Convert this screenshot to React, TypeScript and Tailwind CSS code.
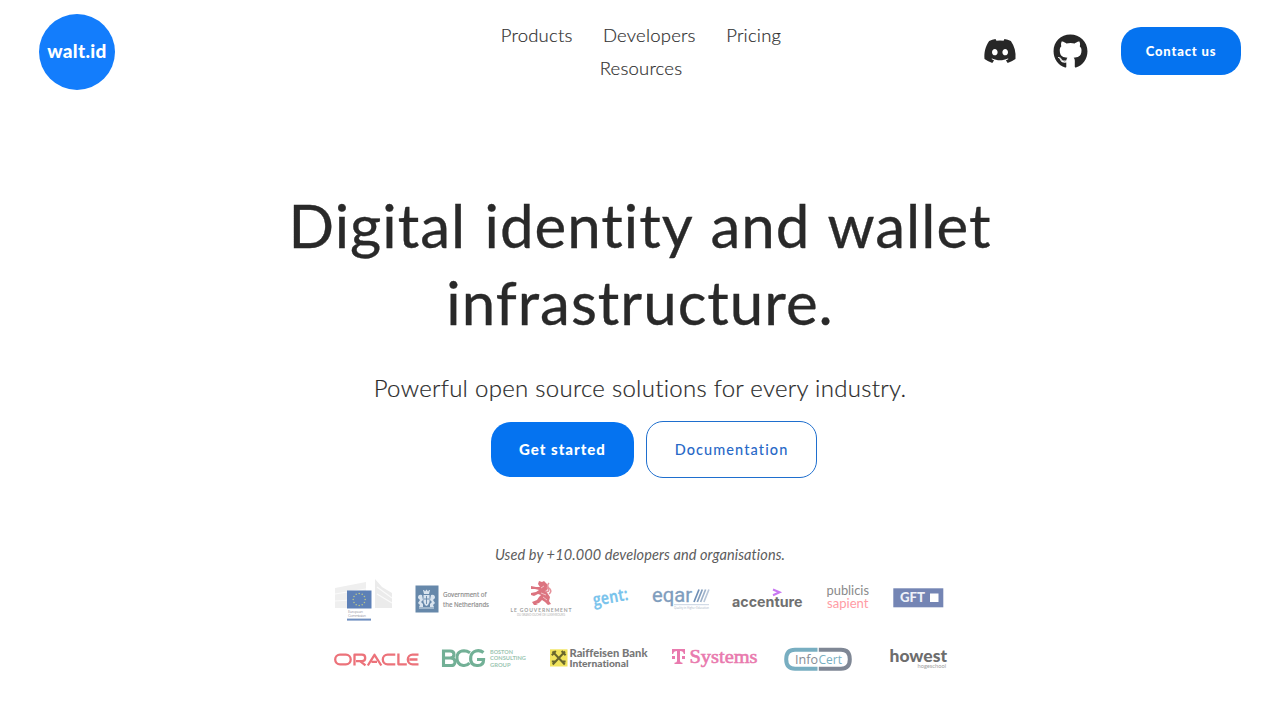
import type { ReactNode } from "react";
import { FaDiscord, FaGithub } from "react-icons/fa";

type LogoProps = { label: string; className: string; viewBox: string; children: ReactNode };

function Logo({ label, className, viewBox, children }: LogoProps) {
  return (
    <svg role="img" aria-label={label} viewBox={viewBox} className={`block shrink-0 overflow-visible ${className}`}>
      {children}
    </svg>
  );
}

const lato = "Lato, 'Open Sans', sans-serif";
const sans = "'Open Sans', 'Noto Sans', sans-serif";
const stars = Array.from({ length: 12 }, (_, i) => (i * Math.PI) / 6);

function PartnerRowOne() {
  return (
    <div className="flex h-12 gap-[22px] pl-[334px]">
      <Logo label="European Commission" className="h-12 w-[59px]" viewBox="334 576 59 48">
        <path d="M335 588 366 582V608H335Z" fill="#efefef" />
        <path d="M375 579 382 587 392 593V608H375Z" fill="#ebebeb" />
        <path d="M335 594 366 589M335 601 366 599M377 587 392 598M377 594 392 603" stroke="#fafafa" strokeWidth="1.200" />
        <rect x="347" y="590.500" width="24.500" height="18" fill="#5d80b7" />
        {stars.map((a) => (
          <circle key={a} cx={359.2 + 6 * Math.sin(a)} cy={599.5 - 6 * Math.cos(a)} r="0.8" fill="#b9c48b" />
        ))}
        <g fill="#a0a0ac" fontFamily={sans} fontSize="4">
          <text x="348" y="612.800" textLength="15">European</text>
          <text x="348" y="616.800" textLength="18">Commission</text>
        </g>
        <rect x="347" y="618.600" width="24" height="2" fill="#6f8fc1" />
      </Logo>
      <Logo label="Government of the Netherlands" className="h-12 w-[73px]" viewBox="415 576 73 48">
        <rect x="415.500" y="585.500" width="23" height="27" fill="#6688aa" />
        <g fill="#d9e4ef">
          <path d="M423 590h1l1 1.500 1.500-2 1.500 2L429 590h1l-1 4h-5Z" />
          <path d="M423.500 595h6v7q-1 3-3 4-2-1-3-4Z" />
          <path d="M422 595q-4-1-4 3l2 2-2 3 2 2-1 2h4v-3l-2-2 2-2ZM431 595q4-1 4 3l-2 2 2 3-2 2 1 2h-4v-3l2-2-2-2Z" />
          <path d="M419 607.500h15v1h-15Z" />
        </g>
        <path d="M426.500 596v8M424 599h5" stroke="#6688aa" strokeWidth="0.900" />
        <g fill="#8c8c8c" stroke="#8c8c8c" strokeWidth="0.150" fontFamily="'Noto Sans', sans-serif" fontSize="6.500">
          <text x="443" y="597" textLength="43.500" lengthAdjust="spacingAndGlyphs">Government of</text>
          <text x="443" y="607.300" textLength="46" lengthAdjust="spacingAndGlyphs">the Netherlands</text>
        </g>
      </Logo>
      <Logo label="Le Gouvernement du Grand-Duché de Luxembourg" className="h-12 w-[61px]" viewBox="510 576 61 48">
        <path
          d="M539 581 542 582 544 581 547 584 548 588 546 591 548 594 550 597 549 601 551 604 548 605 545 602 542 600 539 603 536 604 538 605 534 605 532 602 537 600 539 597 541 595 538 594 534 596 531 595 531 593 536 592 539 590 535 589 531 589 531 586 536 587 540 587 538 584Z"
          fill="#dc7480"
        />
        <path d="M545 591Q551 593 547 587M549 583q-3 3 1 6 2 3-1 5" fill="none" stroke="#e5939c" strokeWidth="1.500" />
        <path d="M541 588 544 586M541 593 546 595M543 597 547 600" stroke="#f6d5d9" strokeWidth="0.800" />
        <text x="510.500" y="611.800" fill="#a0a0a0" fontFamily={lato} fontWeight="700" fontSize="5" textLength="61">LE GOUVERNEMENT</text>
        <text x="517" y="616" fill="#b6b6b6" fontFamily={lato} fontSize="2.800" textLength="48">DU GRAND-DUCHÉ DE LUXEMBOURG</text>
      </Logo>
      <Logo label="gent:" className="h-12 w-[37px]" viewBox="593 576 37 48">
        <text x="594" y="606" transform="rotate(-10 594 606)" fill="#7cc4ec" fontFamily={sans} fontWeight="700" fontSize="17.500" textLength="35.500" lengthAdjust="spacingAndGlyphs">gent:</text>
      </Logo>
      <Logo label="eqar" className="h-12 w-[58px]" viewBox="652 576 58 48">
        <text x="652" y="602" fill="#7f9dbd" stroke="#7f9dbd" strokeWidth="0.300" fontFamily="Roboto, sans-serif" fontSize="20" textLength="40" lengthAdjust="spacingAndGlyphs">eqar</text>
        <g strokeWidth="1.700">
          <path d="M694 602 699 589.500" stroke="#6f8fb5" />
          <path d="M697.300 602 702.300 589.500" stroke="#829dbd" />
          <path d="M700.600 602 705.600 589.500" stroke="#9db1ca" />
          <path d="M703.900 602 708.900 589.500" stroke="#b9c7d9" />
        </g>
        <path d="M674 604.700H709" stroke="#b9c7d9" strokeWidth="0.800" />
        <text x="674" y="609" fill="#a6b4c6" fontFamily={sans} fontSize="4" textLength="35" lengthAdjust="spacingAndGlyphs">Quality in Higher Education</text>
      </Logo>
      <Logo label="accenture" className="h-12 w-[72px]" viewBox="732 576 72 48">
        <path d="M773 589.500 779.500 592.300 773 595.200" fill="none" stroke="#c878f2" strokeWidth="2.100" />
        <text x="732" y="607" fill="#707070" fontFamily="Inter, sans-serif" fontWeight="700" fontSize="14.500" textLength="70.500" lengthAdjust="spacingAndGlyphs">accenture</text>
      </Logo>
      <Logo label="publicis sapient" className="h-12 w-[45px]" viewBox="826 576 45 48">
        <g fontFamily={lato} fontSize="12.500">
          <text x="826.500" y="595" fill="#8a8a8a" textLength="42.500" lengthAdjust="spacingAndGlyphs">publicis</text>
          <text x="827" y="607.500" fill="#ff9ca5" textLength="41.500" lengthAdjust="spacingAndGlyphs">sapient</text>
        </g>
      </Logo>
      <Logo label="GFT" className="h-12 w-[51px]" viewBox="893 576 51 48">
        <rect x="893.300" y="588.300" width="50" height="19" fill="#7485b4" />
        <text x="900" y="602.300" fill="#eef1f8" fontFamily={lato} fontWeight="900" fontSize="12.500" textLength="25" lengthAdjust="spacingAndGlyphs">GFT</text>
        <rect x="930" y="593.500" width="8.500" height="8.500" fill="#fff" />
      </Logo>
    </div>
  );
}

function PartnerRowTwo() {
  return (
    <div className="mt-5 flex h-8 gap-[22px] pl-[334px]">
      <Logo label="Oracle" className="h-8 w-[85px]" viewBox="334 644 85 32">
        <g fill="none" stroke="#ec727a" strokeWidth="2.300" strokeLinejoin="round">
          <rect x="335.200" y="654.700" width="15.500" height="9.600" rx="4.800" />
          <path d="M354.500 665.400V654.700H362Q365.200 654.700 365.200 657.900 365.200 661.100 362 661.100H356M360 661.100 365.500 665.300" />
          <path d="M367.800 665.500 374.500 654.800 381.300 665.500M371.500 661.900H377" />
          <path d="M395.300 654.700H387.600A4.800 4.800 0 0 0 387.600 664.300H395.300" />
          <path d="M398.400 653.600V664.300H406.800" />
          <path d="M418.500 654.700H412.600A4.800 4.800 0 0 0 412.600 664.300H418.500M409.300 659.500H417.500" />
        </g>
      </Logo>
      <Logo label="BCG Boston Consulting Group" className="h-8 w-[87px]" viewBox="441 644 87 32">
        <g fill="none" stroke="#72b096" strokeWidth="3.100">
          <path d="M443.500 651H450Q454 651 454 654.500T450 658H443.500M450 658Q455 658 455 662T450 665.500H443.500V649.500" />
          <path d="M470 652.800Q467 650.800 464 650.800C458 651 456.500 655 457 659 458 666.500 466 667 469.500 663" />
          <path d="M483.500 652.500C479 649 472 650.500 470.800 656.500 469.800 663 473 666 478 665.500 482 665.500 483.600 663 483.600 659.500H477" />
        </g>
        <g fill="#9cc6b2" fontFamily={lato} fontWeight="700" fontSize="5.300">
          <text x="490" y="653.800" textLength="23" lengthAdjust="spacingAndGlyphs">BOSTON</text>
          <text x="490" y="660.300" textLength="36" lengthAdjust="spacingAndGlyphs">CONSULTING</text>
          <text x="490" y="666.800" textLength="20.500" lengthAdjust="spacingAndGlyphs">GROUP</text>
        </g>
      </Logo>
      <Logo label="Raiffeisen Bank International" className="h-8 w-[99px]" viewBox="550 644 99 32">
        <rect x="550" y="649.300" width="17.500" height="17.200" fill="#f1e45d" />
        <path d="M552.500 651.500 564.800 664.500M565 651.500 552.700 664.500M551.800 655.200 555.800 651M561.600 651 565.600 655.200M551.800 661.500h4M561.600 661.500h4" stroke="#68672d" strokeWidth="2" fill="none" />
        <g fill="#777" fontFamily={lato} fontWeight="900" className="[font-variant-ligatures:none]">
          <text x="569.500" y="657" fontSize="11" textLength="78" lengthAdjust="spacingAndGlyphs">Raiffeisen Bank</text>
          <text x="569.500" y="666.800" fontSize="9.500" textLength="59" lengthAdjust="spacingAndGlyphs">International</text>
        </g>
      </Logo>
      <Logo label="T Systems" className="h-8 w-[90px]" viewBox="671 644 90 32">
        <path d="M672 649H685V654H683.800Q683.500 651 680 651V661Q680 662.600 682.500 662.800V664H674.500V662.800Q677 662.600 677 661V651Q673.500 651 673.200 654H672ZM672 656H675V659H672ZM682 656H685V659H682Z" fill="#e97aae" />
        <text x="689.500" y="663.200" fill="#e97aae" stroke="#e97aae" strokeWidth="0.600" fontFamily="'Liberation Serif', serif" fontSize="19.500" textLength="68" lengthAdjust="spacingAndGlyphs">Systems</text>
      </Logo>
      <Logo label="InfoCert" className="h-8 w-[84px]" viewBox="783 644 84 32">
        <g fill="none" strokeWidth="4">
          <path d="M817.500 649.800H795Q786.200 649.800 786.200 659.200T795 668.800H817.500" stroke="#78aec1" />
          <path d="M818.800 649.800H841Q849.800 649.800 849.800 659.200T841 668.800H818.800" stroke="#7f8795" />
        </g>
        <g fontFamily={sans} fontSize="13">
          <text x="795" y="663.800" fill="#858b94" textLength="23" lengthAdjust="spacingAndGlyphs">Info</text>
          <text x="818.500" y="663.800" fill="#78afc2" textLength="23.500" lengthAdjust="spacingAndGlyphs">Cert</text>
        </g>
      </Logo>
      <Logo label="howest hogeschool" className="h-8 w-[58px]" viewBox="889 644 58 32">
        <text x="889.500" y="661.500" fill="#6d6d6d" fontFamily={lato} fontWeight="900" fontSize="17" textLength="57.500" lengthAdjust="spacingAndGlyphs">howest</text>
        <text x="917.500" y="668" fill="#a0a0a0" fontFamily={lato} fontSize="5" textLength="28.500" lengthAdjust="spacingAndGlyphs">hogeschool</text>
      </Logo>
    </div>
  );
}

export default function App() {
  return (
    <div className="h-[720px] w-[1280px] overflow-hidden bg-white font-['Lato','Open_Sans',sans-serif] text-[#292929]">
      <header className="flex h-[102px] items-center justify-between pr-[39px] pl-[39px]">
        <a href="#" className="mt-px flex size-[76px] shrink-0 items-center justify-center rounded-full bg-[#137dfc]">
          <span className="text-[19px] font-black tracking-[0.3px] text-white">walt.id</span>
        </a>
        <nav className="ml-[184px] flex w-[310px] flex-wrap justify-center gap-x-[30.5px] pt-px text-[18.500px] leading-[33px] font-light tracking-[0.2px] text-[#303030] [-webkit-text-stroke:0.2px_#303030]">
          <a href="#">Products</a>
          <a href="#">Developers</a>
          <a href="#">Pricing</a>
          <a href="#">Resources</a>
        </nav>
        <div className="flex items-center">
          <FaDiscord className="mr-[36px] size-[34px] text-[#272727]" />
          <FaGithub className="mr-[33px] size-[35px] text-[#272727]" />
          <button className="h-12 w-[120px] rounded-[20px] bg-[#0573f0] pt-px text-[13px] font-black tracking-[0.85px] text-white">Contact us</button>
        </div>
      </header>
      <main>
        <h1 className="pt-[85px] text-center text-[60px] leading-[77px] font-normal tracking-[1px] [word-spacing:2px] [-webkit-text-stroke:0.35px_#292929]">
          Digital identity and wallet
          <br />
          infrastructure.
        </h1>
        <p className="mt-[30px] text-center text-[24px] leading-[34px] font-light tracking-[0.28px] [-webkit-text-stroke:0.2px_#292929]">Powerful open source solutions for every industry.</p>
        <div className="mt-4 flex items-center justify-center gap-3 pl-7">
          <button className="h-[55px] w-[143px] rounded-[20px] bg-[#0573f0] text-[15px] font-black tracking-[1px] text-white">Get started</button>
          <button className="h-[57px] w-[171px] rounded-[17px] border border-[#1f6fce] text-[14.500px] font-medium tracking-[1.1px] text-[#2869c7]">Documentation</button>
        </div>
        <p className="mt-[67px] text-center text-[14.500px] leading-5 tracking-[0.1px] text-[#5c5c5c] italic [font-variant-ligatures:none]">Used by +10.000 developers and organisations.</p>
        <div className="mt-[11px]">
          <PartnerRowOne />
          <PartnerRowTwo />
        </div>
      </main>
    </div>
  );
}
